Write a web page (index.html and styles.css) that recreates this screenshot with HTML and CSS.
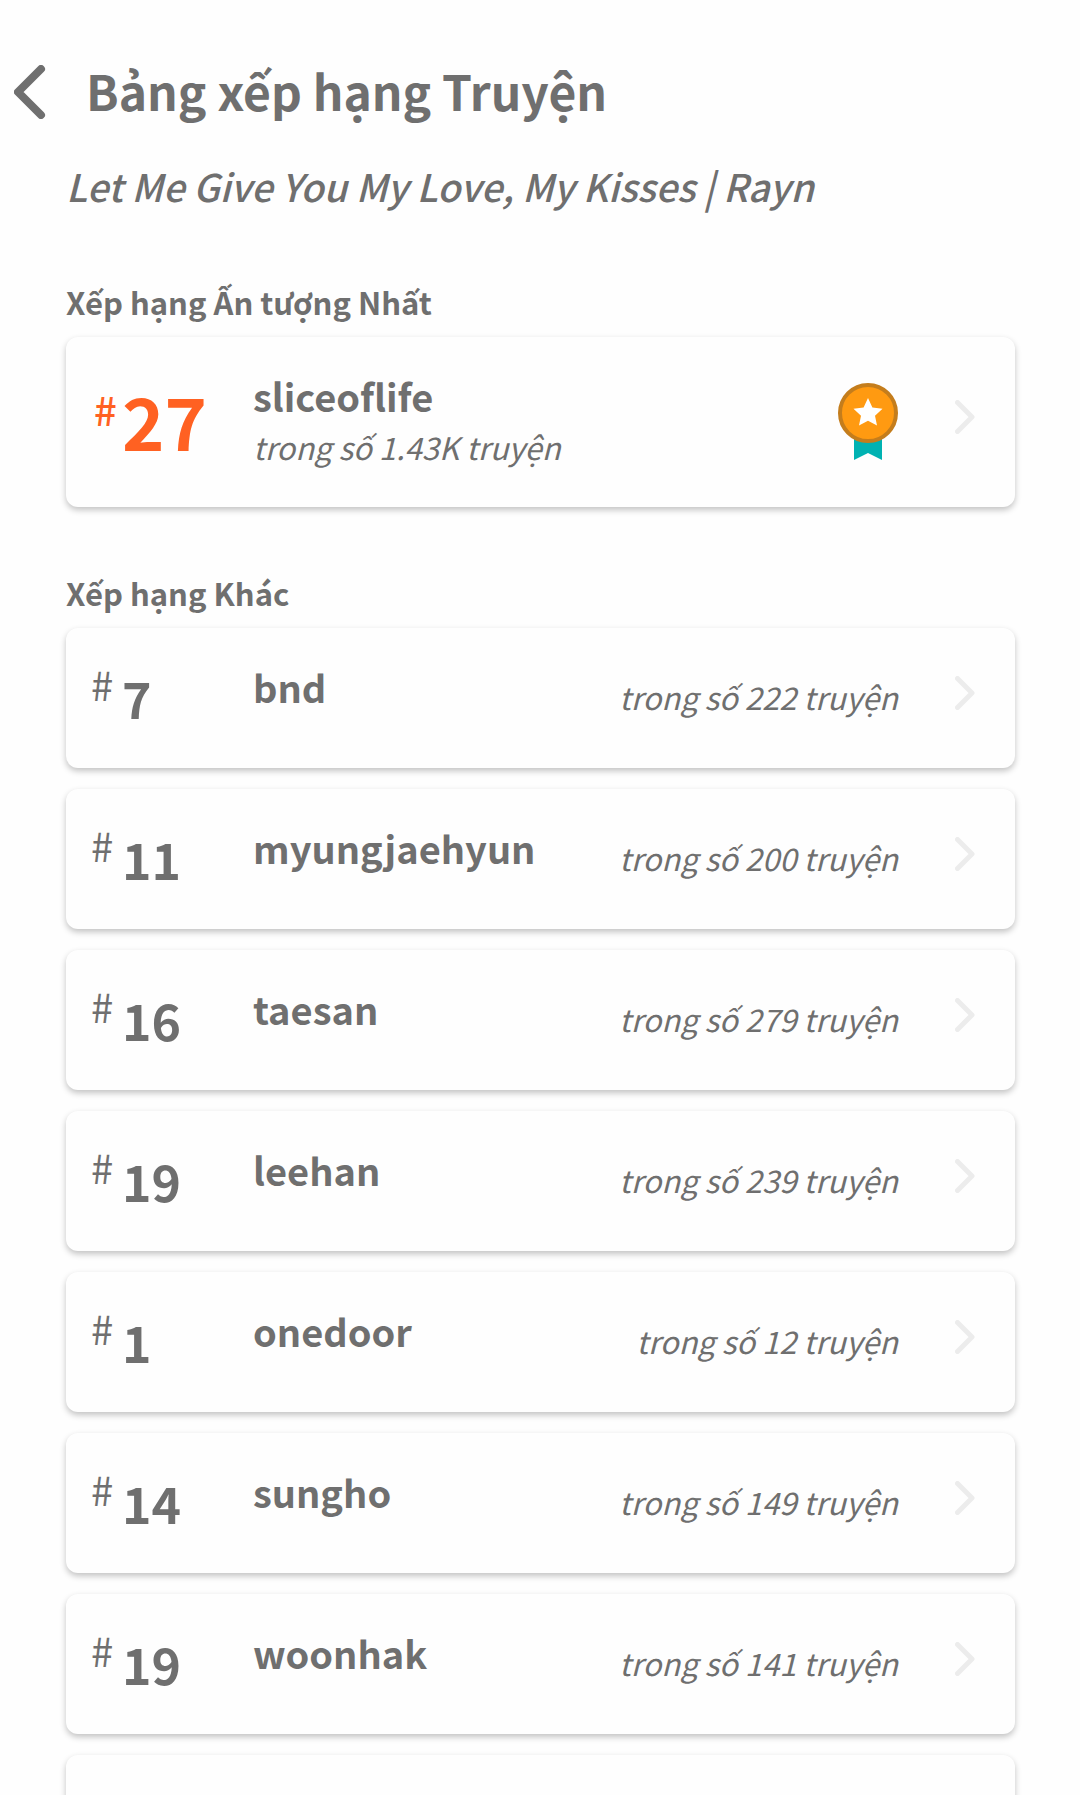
FILE: index.html
```
<!DOCTYPE html>
<html lang="vi">
  <head>
    <meta charset="UTF-8" />
    <meta name="viewport" content="width=device-width, initial-scale=1.0" />
    <title>Bảng xếp hạng Truyện</title>
    <link rel="stylesheet" href="styles.css">
  </head>
  <body>
    <svg class="defs" width="0" height="0" aria-hidden="true">
      <symbol id="chevron" viewBox="0 0 20 34">
        <path d="M2.5 2.5 L17 17 L2.5 31.5" fill="none" stroke="#ececec" stroke-width="5" stroke-linecap="round" stroke-linejoin="round" />
      </symbol>
    </svg>

    <header class="header">
      <button class="back" aria-label="Back">
        <svg width="32" height="54" viewBox="0 0 32 54">
          <path d="M27 4 L4 27 L27 50" fill="none" stroke="#6f6f6f" stroke-width="8" stroke-linecap="round" stroke-linejoin="round" />
        </svg>
      </button>
      <h1>Bảng xếp hạng Truyện</h1>
    </header>

    <main>
      <p class="story">Let Me Give You My Love, My Kisses | Rayn</p>

      <section>
        <h2>Xếp hạng Ấn tượng Nhất</h2>
        <a class="card top" href="#">
          <span class="hash">#</span>
          <span class="rank">27</span>
          <span class="info">
            <span class="tag">sliceoflife</span>
            <span class="total">trong số 1.43K truyện</span>
          </span>
          <svg class="medal" width="60" height="78" viewBox="0 0 60 78">
            <path d="M16 50 H44 V77 L30 70 L16 77 Z" fill="#00b2b2" />
            <circle cx="30" cy="30" r="28" fill="#ff9a11" stroke="#c47d1c" stroke-width="4" />
            <path d="M30 15 L34.400 24.500 L44.500 25.700 L37 32.700 L39 42.500 L30 37.700 L21 42.500 L23 32.700 L15.500 25.700 L25.600 24.500 Z" fill="#fff" />
          </svg>
          <svg class="chevron"><use href="#chevron" /></svg>
        </a>
      </section>

      <section>
        <h2>Xếp hạng Khác</h2>
        <div class="list">
          <a class="card" href="#">
            <span class="hash">#</span>
            <span class="rank">7</span>
            <span class="tag">bnd</span>
            <span class="total">trong số 222 truyện</span>
            <svg class="chevron"><use href="#chevron" /></svg>
          </a>
          <a class="card" href="#">
            <span class="hash">#</span>
            <span class="rank">11</span>
            <span class="tag">myungjaehyun</span>
            <span class="total">trong số 200 truyện</span>
            <svg class="chevron"><use href="#chevron" /></svg>
          </a>
          <a class="card" href="#">
            <span class="hash">#</span>
            <span class="rank">16</span>
            <span class="tag">taesan</span>
            <span class="total">trong số 279 truyện</span>
            <svg class="chevron"><use href="#chevron" /></svg>
          </a>
          <a class="card" href="#">
            <span class="hash">#</span>
            <span class="rank">19</span>
            <span class="tag">leehan</span>
            <span class="total">trong số 239 truyện</span>
            <svg class="chevron"><use href="#chevron" /></svg>
          </a>
          <a class="card" href="#">
            <span class="hash">#</span>
            <span class="rank">1</span>
            <span class="tag">onedoor</span>
            <span class="total">trong số 12 truyện</span>
            <svg class="chevron"><use href="#chevron" /></svg>
          </a>
          <a class="card" href="#">
            <span class="hash">#</span>
            <span class="rank">14</span>
            <span class="tag">sungho</span>
            <span class="total">trong số 149 truyện</span>
            <svg class="chevron"><use href="#chevron" /></svg>
          </a>
          <a class="card" href="#">
            <span class="hash">#</span>
            <span class="rank">19</span>
            <span class="tag">woonhak</span>
            <span class="total">trong số 141 truyện</span>
            <svg class="chevron"><use href="#chevron" /></svg>
          </a>
          <div class="card"></div>
        </div>
      </section>
    </main>
  </body>
</html>
```
FILE: styles.css
```
* {
  margin: 0;
  padding: 0;
  box-sizing: border-box;
}

body {
  font-family: "Noto Sans CJK SC", "Noto Sans", sans-serif;
  color: #6f6f6f;
  background: #fefefe;
}

.defs {
  position: absolute;
}

.header {
  display: flex;
  align-items: center;
  padding: 60px 14px 0;
}

.back {
  width: 72px;
  height: 60px;
  padding-top: 4px;
  border: none;
  background: none;
  cursor: pointer;
}

.back svg {
  display: block;
}

h1 {
  font-size: 48px;
  line-height: 60px;
  font-weight: 700;
}

main {
  padding: 42px 65px 21px 66px;
}

.story {
  font-size: 38px;
  line-height: 48px;
  font-style: italic;
  font-weight: 500;
  margin-bottom: 72px;
}

section {
  margin-bottom: 66px;
}

h2 {
  font-size: 31px;
  line-height: 40px;
  font-weight: 700;
  margin-bottom: 15px;
}

.list {
  display: grid;
  gap: 21px;
}

.card {
  display: grid;
  grid-template-columns: 31px 131px 1fr auto 20px;
  align-items: start;
  min-height: 140px;
  padding: 32px 40px 0 25px;
  border-radius: 12px;
  background: #fefefe;
  box-shadow: 0 3px 6px rgba(0, 0, 0, 0.24);
  color: inherit;
  text-decoration: none;
}

.hash {
  font-size: 40px;
  line-height: 48px;
}

.rank {
  font-size: 50px;
  line-height: 60px;
  font-weight: 700;
  padding-top: 7px;
}

.tag {
  font-size: 38px;
  line-height: 48px;
  font-weight: 700;
  padding-top: 3px;
}

.total {
  font-size: 31px;
  line-height: 40px;
  font-style: italic;
  font-weight: 400;
  padding-top: 17px;
}

.chevron {
  width: 20px;
  height: 34px;
  margin-top: 16px;
}

.card > .total,
.medal {
  margin-right: 57px;
}

/* best ranking */
.top {
  min-height: 170px;
}

.top .hash {
  color: #ff6122;
  font-weight: 500;
  padding: 16px 0 0 3px;
}

.top .rank {
  font-size: 72px;
  line-height: 88px;
  color: #ff6122;
}

.info {
  display: grid;
}

.top .total {
  padding-top: 7px;
}

.medal {
  margin-top: 14px;
}

.top .chevron {
  margin-top: 31px;
}
```
